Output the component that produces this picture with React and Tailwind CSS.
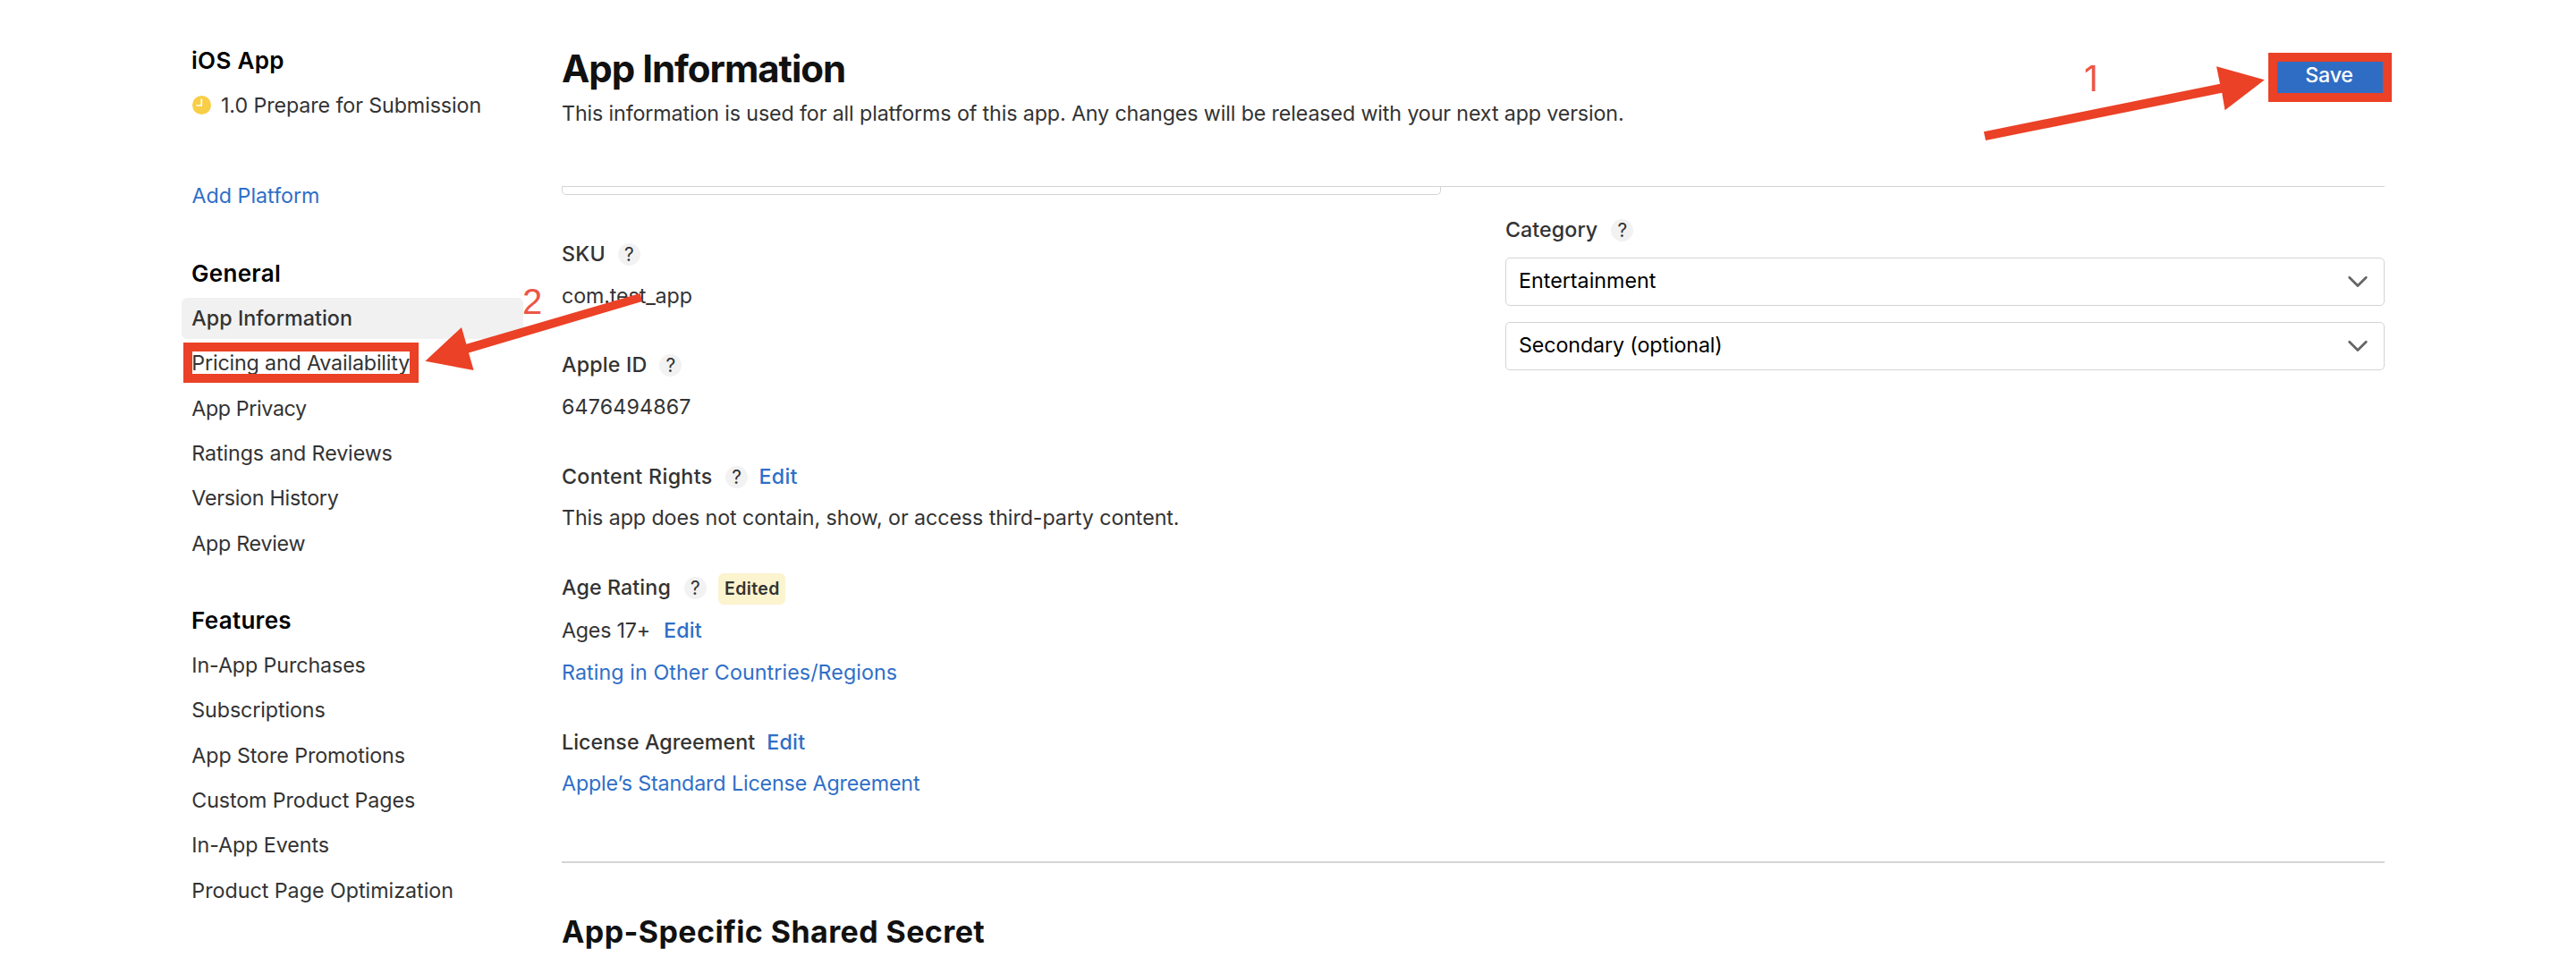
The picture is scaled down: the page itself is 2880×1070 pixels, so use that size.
import React from 'react';

const GENERAL = [
  ['App Information', 'font-medium tracking-[0.05px] bg-[#f1f1f1]'],
  ['Pricing and Availability', 'tracking-[-0.16px]'],
  ['App Privacy', 'tracking-[-0.37px]'],
  ['Ratings and Reviews', 'tracking-[-0.1px]'],
  ['Version History', 'tracking-[-0.25px]'],
  ['App Review', 'tracking-[-0.27px]'],
];

const FEATURES = [
  ['In-App Purchases', 'tracking-[-0.1px]'],
  ['Subscriptions', 'tracking-[-0.1px]'],
  ['App Store Promotions', 'tracking-[-0.09px]'],
  ['Custom Product Pages', 'tracking-[-0.1px]'],
  ['In-App Events', 'tracking-[-0.06px]'],
  ['Product Page Optimization', 'tracking-[-0.01px]'],
];

function NavSection({ title, items, className, marked }) {
  return (
    <section className={className}>
      <h3 className="h-[35px] text-[26px] leading-[35px] font-semibold tracking-[0.3px] text-black">{title}</h3>
      <ul className="-ml-[11px] mt-[10px] flex w-[382px] flex-col gap-[4.33px]">
        {items.map(([label, cls]) => (
          <li key={label} className={`relative h-[46px] rounded-[6px] pl-[11.3px] leading-[45px] ${cls}`}>
            {label}
            {label === marked && (
              <span className="absolute top-0 left-[2px] h-[45px] w-[263px] border-[10px] border-[#eb4126]" />
            )}
          </li>
        ))}
      </ul>
    </section>
  );
}

function Help() {
  return (
    <span className="mt-[2px] flex h-[25px] w-[25px] shrink-0 items-center justify-center rounded-full bg-[#f2f2f2] text-[21px] leading-[25px] font-normal tracking-normal text-[#333]">
      ?
    </span>
  );
}

function Row({ className = '', children }) {
  return <div className={`flex h-[35px] items-center whitespace-nowrap leading-[35px] ${className}`}>{children}</div>;
}

function Edit({ className }) {
  return <a className={`font-medium tracking-[0.22px] text-[#2f6fc8] ${className}`}>Edit</a>;
}

function Select({ children, className }) {
  return (
    <div className={`flex h-[54px] justify-between rounded-[5px] border border-[#d4d4d4] bg-white pl-[14px] pr-[17px] text-black ${className}`}>
      <span className="leading-[49px]">{children}</span>
      <svg className="mt-[18px]" width="24" height="16" viewBox="0 0 24 16" fill="none" stroke="#666" strokeWidth="2.8" strokeLinecap="round" strokeLinejoin="round">
        <path d="M2.7 3.2 L12 12.6 L21.3 3.2" />
      </svg>
    </div>
  );
}

export default function App() {
  return (
    <div className="relative flex h-[1070px] w-[2880px] overflow-hidden bg-white pl-[214px] font-['Inter',sans-serif] text-[23.25px] text-[#333]">
      <aside className="w-[414px] shrink-0 pt-[50px]">
        <h3 className="h-[35px] text-[26px] leading-[35px] font-semibold tracking-[0.3px] text-black">iOS App</h3>
        <Row className="mt-[15px] tracking-[-0.09px]">
          <svg className="mr-[11px] ml-[1px]" width="21" height="21" viewBox="0 0 21 21">
            <circle cx="10.5" cy="10.5" r="10.5" fill="#f8ce46" />
            <path d="M10.3 4.2 V11 H5" fill="none" stroke="#fff" strokeWidth="1.7" strokeLinecap="round" strokeLinejoin="round" />
          </svg>
          1.0 Prepare for Submission
        </Row>
        <Row className="mt-[66px] pl-[0.5px] tracking-[0px] text-[#2f6fc8]">Add Platform</Row>
        <NavSection title="General" items={GENERAL} className="mt-[52px]" marked="Pricing and Availability" />
        <NavSection title="Features" items={FEATURES} className="mt-[45.35px]" />
      </aside>

      <main className="w-[2038px] shrink-0">
        <header className="flex h-[209px] justify-between border-b border-[#d4d4d4]">
          <div className="pt-[51px]">
            <h1 className="text-[42px] leading-[51px] font-bold tracking-[-1.03px] text-[#111]">App Information</h1>
            <p className="mt-[7px] leading-[35px] tracking-[-0.127px]">
              This information is used for all platforms of this app. Any changes will be released with your next app version.
            </p>
          </div>
          <div className="relative mt-[64px] h-[44px] w-[122px]">
            <button className="flex h-[44px] w-[122px] justify-center rounded-[6px] bg-[#2f6dc4] pr-[2px] leading-[39px] font-medium tracking-[-0.25px] text-white">
              Save
            </button>
            <span className="absolute -top-[5px] -left-[8px] h-[55px] w-[138px] border-[10px] border-[#eb4126]" />
          </div>
        </header>

        <div className="flex gap-[72px]">
          <div className="w-[983px]">
            <div className="h-[9px] rounded-b-[5px] border border-t-0 border-[#d4d4d4]" />

            <Row className="mt-[48px] font-medium tracking-[0.23px]">
              <span className="mr-[14px]">SKU</span>
              <Help />
            </Row>
            <Row className="mt-[12px] tracking-[-0.12px]">com.test_app</Row>

            <Row className="mt-[42px] font-medium tracking-[0.17px]">
              <span className="mr-[14px]">Apple ID</span>
              <Help />
            </Row>
            <Row className="mt-[12px] tracking-[0.15px]">6476494867</Row>

            <Row className="mt-[43px] font-medium tracking-[0.32px]">
              <span className="mr-[14.5px]">Content Rights</span>
              <Help />
              <Edit className="ml-[12.5px]" />
            </Row>
            <Row className="mt-[11px] tracking-[-0.09px]">
              This app does not contain, show, or access third-party content.
            </Row>

            <Row className="mt-[43px] font-medium tracking-[0.1px]">
              <span className="mr-[15px]">Age Rating</span>
              <Help />
              <span className="ml-[13px] mt-[4px] h-[35px] w-[75px] rounded-[6px] bg-[#fcf3cf] pl-px text-center text-[19.5px] leading-[34px] font-semibold tracking-[0.4px]">
                Edited
              </span>
            </Row>
            <Row className="mt-[13px] tracking-[-0.22px]">
              Ages 17+
              <Edit className="ml-[15px]" />
            </Row>
            <Row className="mt-[12px] tracking-[0.08px] text-[#2f6fc8]">Rating in Other Countries/Regions</Row>

            <Row className="mt-[43px] font-medium tracking-[0.06px]">
              License Agreement
              <Edit className="ml-[13px]" />
            </Row>
            <Row className="mt-[11px] tracking-[-0.13px] text-[#2f6fc8]">Apple’s Standard License Agreement</Row>
          </div>

          <div className="w-[983px] pt-[30px]">
            <Row className="font-medium tracking-[0.06px]">
              <span className="mr-[15px]">Category</span>
              <Help />
            </Row>
            <Select className="mt-[14px] tracking-[0.02px]">Entertainment</Select>
            <Select className="mt-[18px] tracking-[-0.11px]">Secondary (optional)</Select>
          </div>
        </div>

        <hr className="mt-[70px] h-[2px] border-0 bg-[#d4d4d4]" />
        <h2 className="mt-[55px] text-[34px] leading-[43px] font-bold tracking-[0.41px] text-[#111]">App-Specific Shared Secret</h2>
      </main>

      {/* Step markers drawn over the page */}
      <svg className="pointer-events-none absolute inset-0" width="2880" height="1070" viewBox="0 0 2880 1070" fill="#eb4126">
        <path d="M2217.9 147.2 L2482 93.8 L2478 74.3 L2531.8 89.3 L2487.5 123.3 L2484.2 103.8 L2220 157 Z" />
        <path d="M715.7 328 L521.4 384.8 L516 366 L475.4 403.7 L529.6 414 L524 394.4 L718 337 Z" />
      </svg>
      <span className="absolute top-[64px] left-[2330px] text-[39px] leading-[48px] font-normal text-[#ed5646]">1</span>
      <span className="absolute top-[314px] left-[584px] font-['Liberation_Sans',sans-serif] text-[40px] leading-[46px] text-[#ed5646]">2</span>
    </div>
  );
}
